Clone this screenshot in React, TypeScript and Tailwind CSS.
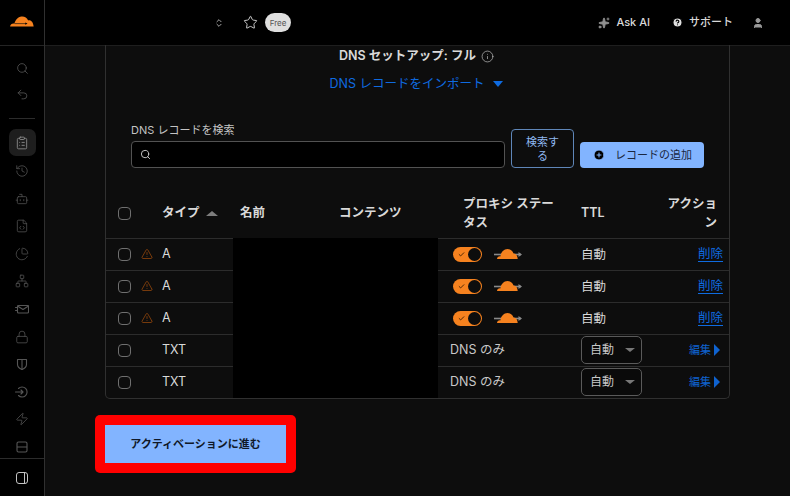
import { ReactNode } from "react";
import { ChevronsUpDown, Star, Sparkles, User, Info, Search, Undo2, ClipboardList, History, Bot, FileCode, ChartPie, Network, Lock, Zap, Check, CirclePlus, CircleHelp, TriangleAlert } from "lucide-react";

function NavSvg({ children }: { children: ReactNode }) {
  return (
    <svg width="14" height="14" viewBox="0 0 14 14" fill="none" stroke="currentColor" strokeWidth="1.100" strokeLinejoin="round" strokeLinecap="round">
      {children}
    </svg>
  );
}

const navIcons = [
  <History size={14} strokeWidth={1.300} />,
  <Bot size={14} strokeWidth={1.300} />,
  <FileCode size={14} strokeWidth={1.300} />,
  <ChartPie size={14} strokeWidth={1.300} />,
  <Network size={14} strokeWidth={1.300} />,
  <NavSvg>
    <rect x="2.500" y="3.500" width="11" height="7.500" rx="1" />
    <path d="M2.500 4l5.500 3.500L13.500 4M0.500 5.500h2M0.500 8.500h2" />
  </NavSvg>,
  <Lock size={14} strokeWidth={1.300} />,
  <NavSvg>
    <path d="M2.500 2.500h9v5c0 2.500-2 4-4.500 5-2.500-1-4.500-2.500-4.500-5z" />
    <path d="M7 2.500v10" />
  </NavSvg>,
  <NavSvg>
    <path d="M3.500 3.500a5 5 0 1 1 0 7" />
    <path d="M0.500 7h7.500M6 5l2 2-2 2" />
  </NavSvg>,
  <Zap size={14} strokeWidth={1.300} />,
  <NavSvg>
    <path d="M3.500 2h7A1.500 1.500 0 0 1 12 3.500V7H2V3.500A1.500 1.500 0 0 1 3.500 2zM2 7h10v3.500a1.500 1.500 0 0 1-1.500 1.500h-7A1.500 1.500 0 0 1 2 10.500z" />
  </NavSvg>,
];

function Logo() {
  return (
    <svg width="24" height="11" viewBox="0 0 26 12">
      <path d="M0 11.5c.2-2 1.800-3.200 3.800-3.200.3 0 .6 0 .9.100C5.500 4.500 8.500 1 12.500.500c3.200-.300 6 1.400 7.200 4.300 3-.300 5.500 1.800 6 6.700H0z" fill="#f6821f" />
      <path d="M5 8.300h13.500" stroke="#0a0a0a" strokeWidth="0.7" />
      <path d="M16.500 7l2.500 1.300-2.500 1.300z" fill="#0a0a0a" />
    </svg>
  );
}

function ProxyCloud() {
  return (
    <svg width="30" height="14" viewBox="0 0 30 14">
      <path d="M1 7.500h27" stroke="#8a8a8a" strokeWidth="1.600" />
      <path d="M25.500 5l3.500 2.500-3.500 2.500z" fill="#8a8a8a" />
      <path d="M4 12c.2-1.800 1.500-2.800 3.400-2.600.4-4 3.500-7.400 7.100-7.400 3 0 5.200 2 6 4.600 2.500-.2 4 2 4.200 5.400H4z" fill="#f6821f" />
    </svg>
  );
}

function Checkbox() {
  return <span className="block w-[13px] h-[13px] rounded-[4px] border border-[#6f6f6f] bg-[#0d0d0d]" />;
}

function ProxyToggle() {
  return (
    <span className="flex items-center justify-between w-[29px] h-[15px] rounded-full bg-[#f6821f] pl-[5px] pr-[1px]">
      <Check size={7} strokeWidth={3} className="text-[#3a1d00]" />
      <span className="w-[13px] h-[13px] rounded-full bg-[#0d0d0d]" />
    </span>
  );
}

function ProxyRow({ first }: { first?: boolean }) {
  return (
    <tr className="h-[32px]">
      <td className="pl-[12px] border-t border-[#2c2c2c]"><Checkbox /></td>
      <td className="border-t border-[#2c2c2c]">
        <div className="flex items-center">
          <TriangleAlert size={12} strokeWidth={1.500} className="ml-[-14px] mr-[9px] text-[#9a4a0c]" />
          <span>A</span>
        </div>
      </td>
      {first && <td rowSpan={5} className="bg-black" />}
      <td className="pl-[15px] border-t border-[#2c2c2c]">
        <div className="flex items-center gap-[11px]">
          <ProxyToggle />
          <ProxyCloud />
        </div>
      </td>
      <td className="border-t border-[#2c2c2c] pl-[6px] pt-[2px]">自動</td>
      <td className="border-t border-[#2c2c2c] text-right pr-[6px]">
        <a className="text-[#0f6be0] underline underline-offset-[3px]">削除</a>
      </td>
    </tr>
  );
}

function TxtRow() {
  return (
    <tr className="h-[32px]">
      <td className="pl-[12px] border-t border-[#2c2c2c]"><Checkbox /></td>
      <td className="border-t border-[#2c2c2c] pl-[7px]">TXT</td>
      <td className="border-t border-[#2c2c2c] pl-[12px] text-[#c8c8c8]">DNS のみ</td>
      <td className="border-t border-[#2c2c2c] pl-[6px]">
        <div className="flex items-center justify-between w-[61px] h-[28px] rounded-[5px] border border-[#5a5a5a] bg-[#0a0a0a] pl-[8px] pr-[6px] text-[12px] text-[#c8c8c8]">
          自動
          <span className="w-0 h-0 border-x-[5px] border-x-transparent border-t-[4px] border-t-[#777]" />
        </div>
      </td>
      <td className="border-t border-[#2c2c2c] pr-[9px]">
        <div className="flex items-center justify-end gap-[3px] text-[11px] text-[#0f63d0] whitespace-nowrap">
          編集
          <span className="w-0 h-0 border-y-[6px] border-y-transparent border-l-[6px] border-l-[#0f63d0]" />
        </div>
      </td>
    </tr>
  );
}

export default function App() {
  return (
    <div className="flex h-[496px] w-[790px] overflow-hidden bg-[#0d0d0d] text-[12.500px] text-[#d9d9d9] font-['Inter','Noto_Sans_CJK_JP',sans-serif]">
      <aside className="flex flex-col w-[45px] shrink-0 bg-black border-r border-[#303030]">
        <div className="flex items-center justify-center h-[46px] border-b border-[#242424] shrink-0 pb-[3px]">
          <Logo />
        </div>
        <div className="flex flex-col items-center flex-1 text-[#565656]">
          <Search size={13} strokeWidth={1.500} className="mt-[16px]" />
          <Undo2 size={13} strokeWidth={1.500} className="mt-[13px]" />
          <div className="w-[26px] h-px bg-[#2c2c2c] mt-[17px]" />
          <div className="flex items-center justify-center w-[27px] h-[27px] mt-[10px] rounded-[7px] bg-[#1e1e1e] text-[#8d8d8d]">
            <ClipboardList size={14} strokeWidth={1.500} />
          </div>
          <div className="flex flex-col items-center gap-[13.600px] mt-[8px]">
            {navIcons.map((icon, i) => <span key={i} className="block h-[14px]">{icon}</span>)}
          </div>
        </div>
        <div className="flex items-center justify-center h-[38px] border-t border-[#2c2c2c] shrink-0">
          <span className="flex justify-end w-[12px] h-[12px] rounded-[3px] border border-[#c4c4c4]">
            <span className="w-[3px] border-l border-[#c4c4c4]" />
          </span>
        </div>
      </aside>

      <div className="flex flex-col flex-1 min-w-0">
        <header className="flex items-center h-[46px] shrink-0 bg-black border-b border-[#1e1e1e] pr-[26px]">
          <ChevronsUpDown size={10} className="ml-[169px] text-[#c4c4c4]" />
          <Star size={15} strokeWidth={1.500} className="ml-[19px] text-[#d6d6d6]" />
          <span className="ml-[7px] flex items-center justify-center w-[26px] h-[19px] rounded-full bg-[#dfdfdf] text-[8px] text-[#555]">Free</span>
          <div className="ml-auto flex items-center text-[11px] font-medium text-[#d9d9d9]">
            <Sparkles size={12} className="text-[#8f8f8f] fill-[#8f8f8f] mr-[6px]" />
            Ask AI
            <CircleHelp size={11} strokeWidth={2.500} className="ml-[22px] mr-[6px] text-black fill-[#e0e0e0]" />
            サポート
            <User size={12} className="ml-[19px] text-[#9a9a9a] fill-[#9a9a9a]" />
          </div>
        </header>

        <main className="flex-1 pl-[60px] pr-[60px]">
          <section className="w-[625px] h-[354px] border-x border-b border-[#303030] rounded-b-[5px]">
            <div className="flex items-center justify-center gap-[4px] h-[23px] mt-[-1px] pr-[2px] font-semibold text-[#d9d9d9]">
              DNS セットアップ: フル
              <Info size={13} strokeWidth={1.300} className="ml-[1px] font-normal text-[#bdbdbd]" />
            </div>
            <div className="flex items-center justify-center gap-[8px] h-[26px] mt-[3px] pr-[2px] text-[#0f6be0]">
              DNS レコードをインポート
              <span className="ml-[1px] w-0 h-0 border-x-[5px] border-x-transparent border-t-[6px] border-t-[#0f6be0]" />
            </div>

            <div className="flex items-end mt-[25px] pl-[25px]">
              <div className="w-[374px]">
                <div className="text-[11px] text-[#c4c4c4] leading-[16px] mb-[3px]">DNS レコードを検索</div>
                <div className="flex items-center h-[27px] rounded-[4px] border border-[#525252] bg-black pl-[8px]">
                  <Search size={11} strokeWidth={2} className="text-[#d0d0d0]" />
                </div>
              </div>
              <button className="ml-[6px] w-[63px] h-[39px] rounded-[4px] border border-[#5f86b8] px-[10px] text-[11px] leading-[14px] text-[#8fb8f0]">検索する</button>
              <button className="flex items-center ml-[6px] w-[124px] h-[26px] rounded-[4px] bg-[#82b4ff] pl-[13px] text-[11px] text-[#1a2740]">
                <CirclePlus size={12} strokeWidth={2} className="text-[#82b4ff] fill-black mr-[10px]" />
                レコードの追加
              </button>
            </div>

            <table className="w-full table-fixed mt-[21px] border-collapse text-left">
              <colgroup>
                <col className="w-[49px]" />
                <col className="w-[78px]" />
                <col className="w-[205px]" />
                <col className="w-[137px]" />
                <col className="w-[87px]" />
                <col />
              </colgroup>
              <thead>
                <tr className="h-[49px] font-semibold text-[#d9d9d9]">
                  <th className="pl-[12px] font-semibold"><Checkbox /></th>
                  <th className="pl-[7px] font-semibold">
                    <div className="flex items-center gap-[6px] whitespace-nowrap">
                      タイプ
                      <span className="w-0 h-0 border-x-[6px] border-x-transparent border-b-[5px] border-b-[#7d7d7d]" />
                    </div>
                  </th>
                  <th className="font-semibold pl-[7px]">
                    <div className="flex">
                      <span className="w-[99px]">名前</span>
                      <span>コンテンツ</span>
                    </div>
                  </th>
                  <th className="pl-[25px] pr-[16px] font-semibold leading-[19px]">プロキシ ステータス</th>
                  <th className="pl-[6px] font-semibold">TTL</th>
                  <th className="pr-[12px] font-semibold text-right leading-[19px]">アクション</th>
                </tr>
              </thead>
              <tbody>
                <ProxyRow first />
                <ProxyRow />
                <ProxyRow />
                <TxtRow />
                <TxtRow />
              </tbody>
            </table>
          </section>

          <div className="w-[201px] h-[58px] mt-[16px] ml-[-10px] p-[10px] rounded-[5px] bg-[#ff0000]">
            <button className="w-full h-full bg-[#82b4ff] text-[11px] font-semibold text-[#101828]">アクティベーションに進む</button>
          </div>
        </main>
      </div>
    </div>
  );
}
